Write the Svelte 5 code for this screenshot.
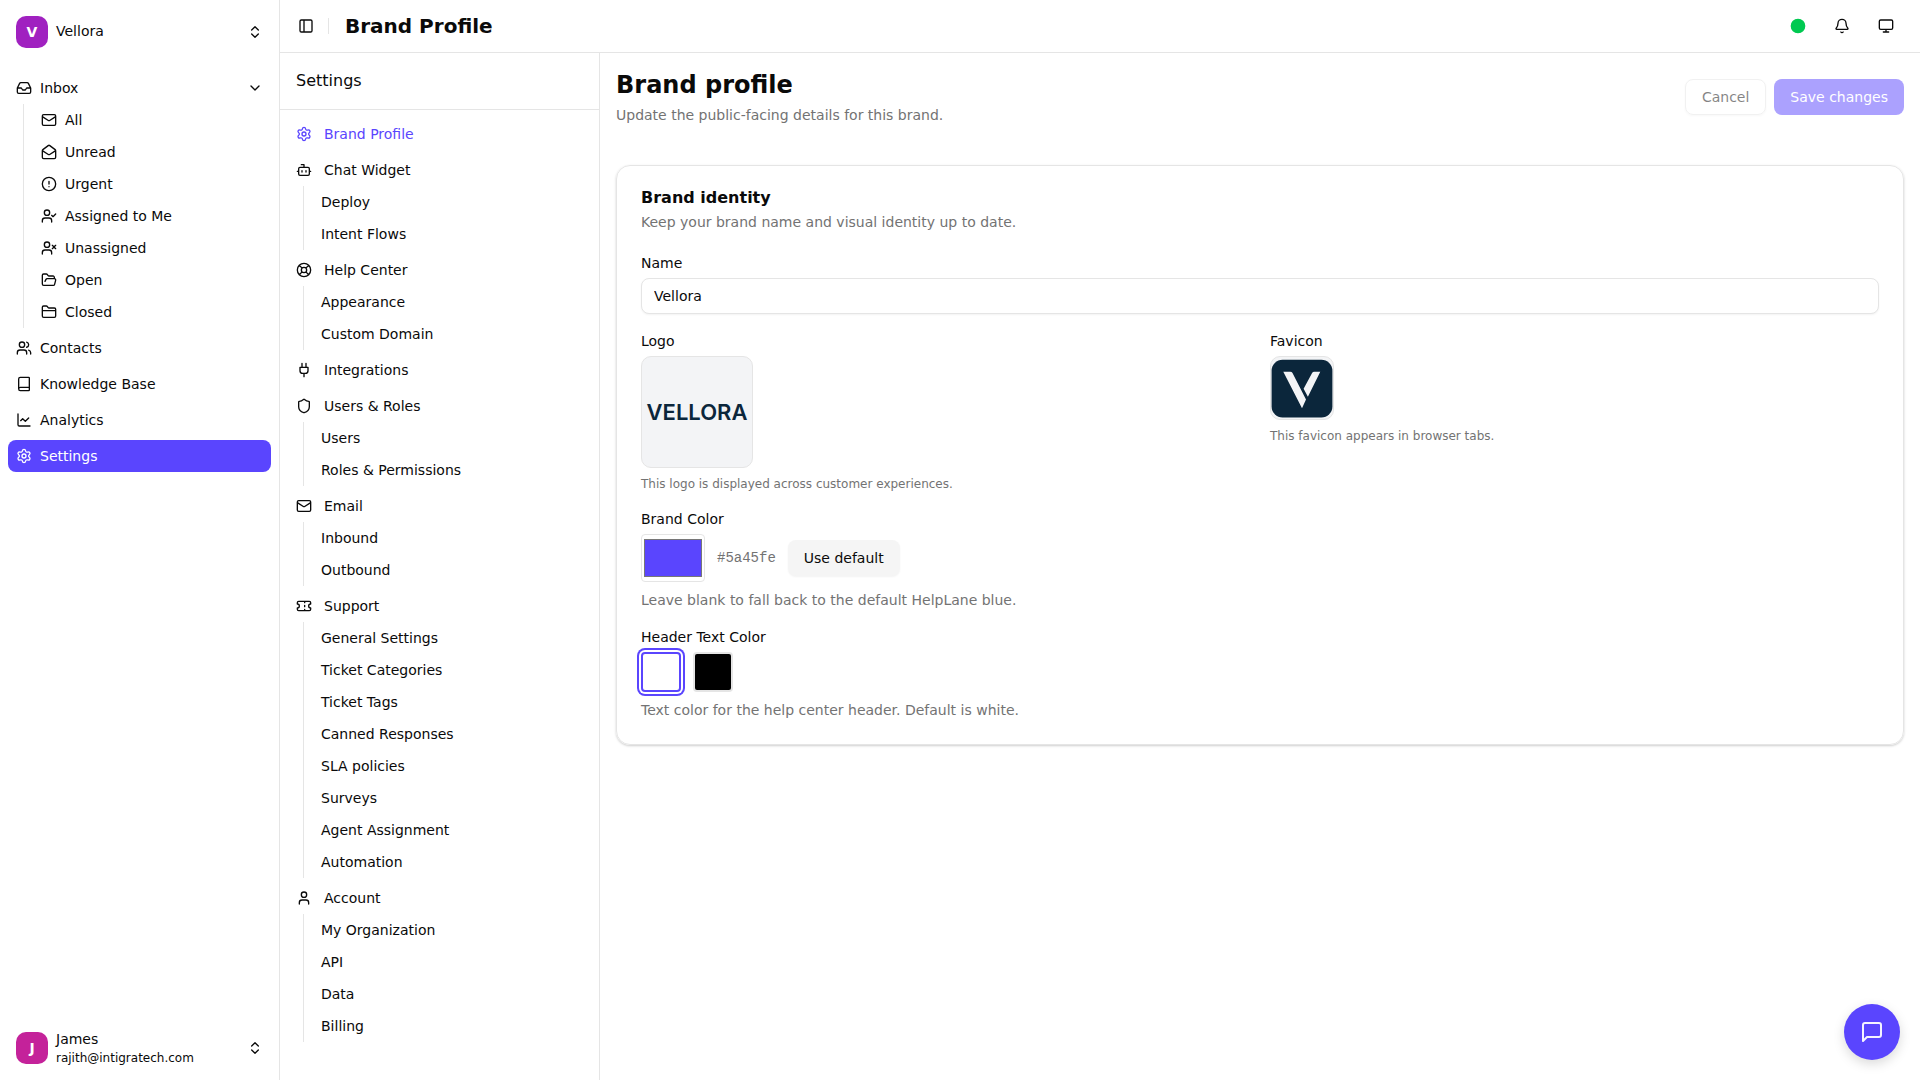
<script>
  const icons = {
    inbox: 'M22 12h-6l-2 3h-4l-2-3H2 M5.45 5.11 2 12v6a2 2 0 0 0 2 2h16a2 2 0 0 0 2-2v-6l-3.45-6.89A2 2 0 0 0 16.76 4H7.24a2 2 0 0 0-1.79 1.11z',
    mail: 'M22 7l-8.991 5.727a2 2 0 0 1-2.009 0L2 7 M4 4h16a2 2 0 0 1 2 2v12a2 2 0 0 1-2 2H4a2 2 0 0 1-2-2V6a2 2 0 0 1 2-2z',
    mailOpen: 'M21.2 8.4c.5.38.8.97.8 1.6v10a2 2 0 0 1-2 2H4a2 2 0 0 1-2-2V10a2 2 0 0 1 .8-1.6l8-6a2 2 0 0 1 2.4 0l8 6Z M22 10l-8.97 5.7a1.94 1.94 0 0 1-2.06 0L2 10',
    alert: 'M2 12a10 10 0 1 0 20 0a10 10 0 1 0-20 0 M12 8v4 M12 16h.01',
    userCheck: 'M16 11l2 2 4-4 M16 21v-2a4 4 0 0 0-4-4H6a4 4 0 0 0-4 4v2 M5 7a4 4 0 1 0 8 0a4 4 0 1 0-8 0',
    userX: 'M16 21v-2a4 4 0 0 0-4-4H6a4 4 0 0 0-4 4v2 M5 7a4 4 0 1 0 8 0a4 4 0 1 0-8 0 M17 8l5 5 M22 8l-5 5',
    folderOpen: 'M6 14l1.5-2.9A2 2 0 0 1 9.24 10H20a2 2 0 0 1 1.94 2.5l-1.54 6a2 2 0 0 1-1.95 1.5H4a2 2 0 0 1-2-2V5a2 2 0 0 1 2-2h3.9a2 2 0 0 1 1.69.9l.81 1.2a2 2 0 0 0 1.67.9H18a2 2 0 0 1 2 2v2',
    folder: 'M20 20a2 2 0 0 0 2-2V8a2 2 0 0 0-2-2h-7.9a2 2 0 0 1-1.69-.9L9.6 3.9A2 2 0 0 0 7.93 3H4a2 2 0 0 0-2 2v13a2 2 0 0 0 2 2Z M2 10h20',
    users: 'M16 21v-2a4 4 0 0 0-4-4H6a4 4 0 0 0-4 4v2 M16 3.128a4 4 0 0 1 0 7.744 M22 21v-2a4 4 0 0 0-3-3.87 M5 7a4 4 0 1 0 8 0a4 4 0 1 0-8 0',
    book: 'M4 19.5v-15A2.5 2.5 0 0 1 6.5 2H19a1 1 0 0 1 1 1v18a1 1 0 0 1-1 1H6.5a1 1 0 0 1 0-5H20',
    chart: 'M3 3v16a2 2 0 0 0 2 2h16 M19 9l-5 5-4-4-3 3',
    settings: 'M9.671 4.136a2.34 2.34 0 0 1 4.659 0 2.34 2.34 0 0 0 3.319 1.915 2.34 2.34 0 0 1 2.33 4.033 2.34 2.34 0 0 0 0 3.831 2.34 2.34 0 0 1-2.33 4.033 2.34 2.34 0 0 0-3.319 1.915 2.34 2.34 0 0 1-4.659 0 2.34 2.34 0 0 0-3.32-1.915 2.34 2.34 0 0 1-2.33-4.033 2.34 2.34 0 0 0 0-3.831A2.34 2.34 0 0 1 6.35 6.051a2.34 2.34 0 0 0 3.319-1.915 M9 12a3 3 0 1 0 6 0a3 3 0 1 0-6 0',
    bot: 'M12 8V4H8 M6 8h12a2 2 0 0 1 2 2v8a2 2 0 0 1-2 2H6a2 2 0 0 1-2-2v-8a2 2 0 0 1 2-2z M2 14h2 M20 14h2 M15 13v2 M9 13v2',
    lifeBuoy: 'M2 12a10 10 0 1 0 20 0a10 10 0 1 0-20 0 M8 12a4 4 0 1 0 8 0a4 4 0 1 0-8 0 M4.93 4.93l4.24 4.24 M14.83 9.17l4.24-4.24 M14.83 14.83l4.24 4.24 M9.17 14.83l-4.24 4.24',
    plug: 'M12 22v-5 M9 8V2 M15 8V2 M18 8v5a4 4 0 0 1-4 4h-4a4 4 0 0 1-4-4V8Z',
    shield: 'M20 13c0 5-3.5 7.5-7.66 8.95a1 1 0 0 1-.67-.01C7.5 20.5 4 18 4 13V6a1 1 0 0 1 1-1c2 0 4.5-1.2 6.24-2.72a1.17 1.17 0 0 1 1.52 0C14.51 3.81 17 5 19 5a1 1 0 0 1 1 1z',
    ticket: 'M2 9a3 3 0 0 1 0 6v2a2 2 0 0 0 2 2h16a2 2 0 0 0 2-2v-2a3 3 0 0 1 0-6V7a2 2 0 0 0-2-2H4a2 2 0 0 0-2 2Z M13 5v2 M13 17v2 M13 11v2',
    user: 'M19 21v-2a4 4 0 0 0-4-4H9a4 4 0 0 0-4 4v2 M8 7a4 4 0 1 0 8 0a4 4 0 1 0-8 0',
    panel: 'M5 3h14a2 2 0 0 1 2 2v14a2 2 0 0 1-2 2H5a2 2 0 0 1-2-2V5a2 2 0 0 1 2-2z M9 3v18',
    bell: 'M10.268 21a2 2 0 0 0 3.464 0 M3.262 15.326A1 1 0 0 0 4 17h16a1 1 0 0 0 .74-1.673C19.41 13.956 18 12.499 18 8A6 6 0 0 0 6 8c0 4.499-1.411 5.956-2.738 7.326',
    monitor: 'M4 3h16a2 2 0 0 1 2 2v10a2 2 0 0 1-2 2H4a2 2 0 0 1-2-2V5a2 2 0 0 1 2-2z M8 21h8 M12 17v4',
    chevronDown: 'M6 9l6 6 6-6',
    chevrons: 'M7 15l5 5 5-5 M7 9l5-5 5 5',
    message: 'M21 15a2 2 0 0 1-2 2H7l-4 4V5a2 2 0 0 1 2-2h14a2 2 0 0 1 2 2z',
  }

  const inboxItems = [
    { label: 'All', icon: 'mail' },
    { label: 'Unread', icon: 'mailOpen' },
    { label: 'Urgent', icon: 'alert' },
    { label: 'Assigned to Me', icon: 'userCheck' },
    { label: 'Unassigned', icon: 'userX' },
    { label: 'Open', icon: 'folderOpen' },
    { label: 'Closed', icon: 'folder' },
  ]

  const mainItems = [
    { label: 'Contacts', icon: 'users' },
    { label: 'Knowledge Base', icon: 'book' },
    { label: 'Analytics', icon: 'chart' },
    { label: 'Settings', icon: 'settings', active: true },
  ]

  const sections = [
    { label: 'Brand Profile', icon: 'settings', active: true },
    { label: 'Chat Widget', icon: 'bot', children: ['Deploy', 'Intent Flows'] },
    { label: 'Help Center', icon: 'lifeBuoy', children: ['Appearance', 'Custom Domain'] },
    { label: 'Integrations', icon: 'plug' },
    { label: 'Users & Roles', icon: 'shield', children: ['Users', 'Roles & Permissions'] },
    { label: 'Email', icon: 'mail', children: ['Inbound', 'Outbound'] },
    {
      label: 'Support',
      icon: 'ticket',
      children: [
        'General Settings',
        'Ticket Categories',
        'Ticket Tags',
        'Canned Responses',
        'SLA policies',
        'Surveys',
        'Agent Assignment',
        'Automation',
      ],
    },
    { label: 'Account', icon: 'user', children: ['My Organization', 'API', 'Data', 'Billing'] },
  ]

  const defaultColor = '#5a45fe'

  let inboxOpen = $state(true)
  let name = $state('Vellora')
  let color = $state(defaultColor)
  let headerText = $state('white')
  let dirty = $derived(name !== 'Vellora' || color !== defaultColor || headerText !== 'white')

  function reset() {
    name = 'Vellora'
    color = defaultColor
    headerText = 'white'
  }
</script>

{#snippet icon(key)}
  <svg class="icon" viewBox="0 0 24 24" aria-hidden="true"><path d={icons[key]} /></svg>
{/snippet}

<div class="app">
  <aside class="sidebar">
    <button class="account" type="button">
      <span class="avatar brand">V</span>
      <span class="who"><span class="name">Vellora</span></span>
      {@render icon('chevrons')}
    </button>

    <nav class="menu" aria-label="Main">
      <div>
        <button class="item" type="button" aria-expanded={inboxOpen} onclick={() => (inboxOpen = !inboxOpen)}>
          {@render icon('inbox')}
          <span class="grow">Inbox</span>
          {@render icon('chevronDown')}
        </button>
        {#if inboxOpen}
          <div class="sub">
            {#each inboxItems as item (item.label)}
              <a class="item" href="#inbox">{@render icon(item.icon)}{item.label}</a>
            {/each}
          </div>
        {/if}
      </div>
      {#each mainItems as item (item.label)}
        <a class="item" class:active={item.active} href="#main">{@render icon(item.icon)}{item.label}</a>
      {/each}
    </nav>

    <button class="account" type="button">
      <span class="avatar person">J</span>
      <span class="who">
        <span class="name">James</span>
        <span class="email">rajith@intigratech.com</span>
      </span>
      {@render icon('chevrons')}
    </button>
  </aside>

  <div class="page">
    <header class="topbar">
      <button class="tool small" type="button" aria-label="Toggle sidebar">{@render icon('panel')}</button>
      <span class="separator"></span>
      <h1>Brand Profile</h1>
      <div class="tools">
        <button class="tool" type="button" aria-label="Online">
          <svg class="icon online" viewBox="0 0 24 24" aria-hidden="true"><circle cx="12" cy="12" r="10" /></svg>
        </button>
        <button class="tool" type="button" aria-label="Notifications">{@render icon('bell')}</button>
        <button class="tool" type="button" aria-label="Theme">{@render icon('monitor')}</button>
      </div>
    </header>

    <div class="body">
      <aside class="settings">
        <h2>Settings</h2>
        <nav class="menu" aria-label="Settings">
          {#each sections as section (section.label)}
            <div>
              <a class="item" class:current={section.active} href="#settings">
                {@render icon(section.icon)}{section.label}
              </a>
              {#if section.children}
                <div class="sub">
                  {#each section.children as child (child)}
                    <a class="item" href="#settings">{child}</a>
                  {/each}
                </div>
              {/if}
            </div>
          {/each}
        </nav>
      </aside>

      <main>
        <div class="intro">
          <div>
            <h2>Brand profile</h2>
            <p>Update the public-facing details for this brand.</p>
          </div>
          <div class="actions">
            <button class="btn outline" type="button" disabled={!dirty} onclick={reset}>Cancel</button>
            <button class="btn primary" type="button" disabled={!dirty}>Save changes</button>
          </div>
        </div>

        <section class="card">
          <div class="card-head">
            <h3>Brand identity</h3>
            <p>Keep your brand name and visual identity up to date.</p>
          </div>

          <div class="fields">
            <div class="field">
              <label for="name">Name</label>
              <input id="name" class="text" type="text" bind:value={name} />
            </div>

            <div class="columns">
              <div class="field">
                <label for="logo">Logo</label>
                <button id="logo" class="upload logo" type="button">VELLORA</button>
                <p class="hint">This logo is displayed across customer experiences.</p>
              </div>
              <div class="field">
                <label for="favicon">Favicon</label>
                <button id="favicon" class="upload favicon" type="button" aria-label="Favicon">
                  <svg viewBox="0 0 62 62" aria-hidden="true">
                    <rect x="0.600" y="2.700" width="60.800" height="57.800" rx="11" fill="#0b263b" />
                    <path d="M12.300 14.700h7q1.500 0 2.200 1.400l13.500 26.400-4 8.700zM49.300 14.700h-6q-1.500 0-2.200 1.400l-8.500 15.700 4.300 8z" fill="#f3f4f6" />
                  </svg>
                </button>
                <p class="hint">This favicon appears in browser tabs.</p>
              </div>
            </div>

            <div class="field">
              <label for="color">Brand Color</label>
              <div class="row">
                <input id="color" class="color" type="color" bind:value={color} />
                <span class="hex">{color}</span>
                <button class="btn secondary" type="button" onclick={() => (color = defaultColor)}>Use default</button>
              </div>
              <p>Leave blank to fall back to the default HelpLane blue.</p>
            </div>

            <div class="field">
              <span class="label" id="header-text">Header Text Color</span>
              <div class="row" role="radiogroup" aria-labelledby="header-text">
                <input class="swatch" type="radio" value="white" aria-label="White" bind:group={headerText} />
                <input class="swatch black" type="radio" value="black" aria-label="Black" bind:group={headerText} />
              </div>
              <p>Text color for the help center header. Default is white.</p>
            </div>
          </div>
        </section>
      </main>
    </div>
  </div>

  <button class="chat" type="button" aria-label="Open chat">{@render icon('message')}</button>
</div>

<style>
  :global(body) {
    margin: 0;
    background: #ffffff;
  }
  .app {
    --text: #0a0a0a;
    --muted: #737373;
    --line: #e5e5e5;
    --primary: #5a45fe;
    display: flex;
    min-height: 100vh;
    color: var(--text);
    font-family: "DejaVu Sans", sans-serif;
    font-size: 14px;
    line-height: 20px;
  }
  .app :global(*) {
    box-sizing: border-box;
  }
  h1,
  h2,
  h3,
  p {
    margin: 0;
  }
  p {
    color: var(--muted);
  }
  button,
  input {
    font: inherit;
    color: inherit;
  }
  button {
    border: 0;
    padding: 0;
    background: none;
    cursor: pointer;
  }
  .icon {
    width: 16px;
    height: 16px;
    flex: none;
    fill: none;
    stroke: currentColor;
    stroke-width: 2;
    stroke-linecap: round;
    stroke-linejoin: round;
  }

  /* sidebar */
  .sidebar {
    width: 280px;
    flex: none;
    display: flex;
    flex-direction: column;
    padding: 8px;
    border-right: 1px solid var(--line);
  }
  .account {
    display: flex;
    align-items: center;
    gap: 8px;
    height: 48px;
    padding: 8px;
    text-align: left;
  }
  .avatar {
    width: 32px;
    height: 32px;
    flex: none;
    display: grid;
    place-items: center;
    border-radius: 10px;
    color: #ffffff;
    font-weight: 700;
  }
  .brand {
    background: #a021c0;
  }
  .person {
    background: #c4229a;
  }
  .who {
    flex: 1;
    display: grid;
  }
  .name {
    margin-bottom: 2px;
    line-height: 18px;
  }
  .email {
    font-size: 12px;
    line-height: 16px;
  }
  .menu {
    display: flex;
    flex-direction: column;
    gap: 4px;
  }
  .sidebar .menu {
    flex: 1;
    padding-top: 16px;
  }
  .item {
    width: 100%;
    height: 32px;
    display: flex;
    align-items: center;
    gap: 8px;
    padding: 0 8px;
    border-radius: 8px;
    color: inherit;
    text-align: left;
    text-decoration: none;
    white-space: nowrap;
  }
  .grow {
    flex: 1;
  }
  .item.active {
    background: var(--primary);
    color: #ffffff;
  }
  .item.current {
    color: var(--primary);
  }
  .sub {
    margin-left: 15px;
    padding-left: 9px;
    border-left: 1px solid var(--line);
  }

  /* top bar */
  .page {
    flex: 1;
    min-width: 0;
    display: flex;
    flex-direction: column;
  }
  .topbar {
    height: 53px;
    display: flex;
    align-items: center;
    padding: 0 16px 0 12px;
    border-bottom: 1px solid var(--line);
  }
  .tool {
    width: 36px;
    height: 36px;
    display: grid;
    place-items: center;
    border-radius: 8px;
  }
  .tool.small {
    width: 28px;
    height: 28px;
  }
  .separator {
    width: 1px;
    height: 16px;
    margin: 0 16px 0 8px;
    background: var(--line);
  }
  h1 {
    font-size: 20px;
    line-height: 28px;
    font-weight: 700;
  }
  .tools {
    margin-left: auto;
    display: flex;
    gap: 8px;
  }
  .online {
    color: #00c951;
    fill: currentColor;
  }

  /* settings navigation */
  .body {
    flex: 1;
    display: flex;
  }
  .settings {
    width: 320px;
    flex: none;
    border-right: 1px solid var(--line);
  }
  .settings h2 {
    padding: 16px;
    border-bottom: 1px solid var(--line);
    font-size: 16px;
    line-height: 24px;
    font-weight: 400;
  }
  .settings .menu {
    padding: 8px;
  }
  .settings .item {
    gap: 12px;
  }

  /* form */
  main {
    flex: 1;
    min-width: 0;
    padding: 16px;
  }
  .intro {
    display: flex;
    align-items: center;
    justify-content: space-between;
    margin-bottom: 40px;
  }
  .intro h2 {
    margin-bottom: 4px;
    font-size: 24px;
    line-height: 32px;
    font-weight: 700;
  }
  .actions {
    display: flex;
    gap: 8px;
  }
  .btn {
    height: 36px;
    padding: 0 16px;
    border-radius: 8px;
  }
  .btn:disabled {
    opacity: 0.5;
    cursor: default;
  }
  .outline {
    border: 1px solid var(--line);
    box-shadow: 0 1px 2px rgba(0, 0, 0, 0.05);
  }
  .primary {
    background: var(--primary);
    color: #ffffff;
  }
  .secondary {
    background: #f5f5f5;
    box-shadow: 0 1px 2px rgba(0, 0, 0, 0.05);
  }
  .card {
    padding: 24px;
    border: 1px solid var(--line);
    border-radius: 14px;
    box-shadow: 0 1px 3px rgba(0, 0, 0, 0.1), 0 1px 2px rgba(0, 0, 0, 0.1);
  }
  .card-head {
    display: grid;
    gap: 6px;
    margin-bottom: 24px;
  }
  h3 {
    font-size: 16px;
    line-height: 16px;
    font-weight: 700;
  }
  .fields {
    display: grid;
    gap: 20px;
  }
  .field {
    display: grid;
    gap: 8px;
    align-content: start;
    justify-items: start;
  }
  label,
  .label {
    line-height: 14px;
  }
  .text {
    width: 100%;
    height: 36px;
    padding: 0 12px;
    border: 1px solid var(--line);
    border-radius: 8px;
    background: #ffffff;
    box-shadow: 0 1px 2px rgba(0, 0, 0, 0.05);
  }
  .columns {
    display: grid;
    grid-template-columns: 1fr 1fr;
    gap: 20px;
  }
  .upload {
    display: grid;
    place-items: center;
    border: 1px solid var(--line);
    border-radius: 10px;
    background: #f3f4f6;
    overflow: hidden;
  }
  .logo {
    width: 112px;
    height: 112px;
    color: #0b263b;
    font-family: Inter, sans-serif;
    font-size: 22px;
    font-weight: 600;
  }
  .favicon {
    width: 64px;
    height: 64px;
  }
  .favicon svg {
    width: 62px;
    height: 62px;
  }
  .hint {
    font-size: 12px;
    line-height: 16px;
  }
  .row {
    display: flex;
    align-items: center;
    gap: 12px;
  }
  .color {
    width: 64px;
    height: 48px;
    padding: 0;
    border: 1px solid var(--line);
    border-radius: 4px;
    background: #ffffff;
    cursor: pointer;
  }
  .hex {
    color: var(--muted);
    font-family: "Liberation Mono", monospace;
  }
  .swatch {
    appearance: none;
    width: 40px;
    height: 40px;
    margin: 0;
    border: 2px solid var(--line);
    border-radius: 4px;
    background: #ffffff;
    cursor: pointer;
  }
  .swatch.black {
    background: #000000;
  }
  .swatch:checked {
    border-color: var(--primary);
    box-shadow: 0 0 0 2px #ffffff, 0 0 0 4px var(--primary);
  }

  .chat {
    position: fixed;
    right: 20px;
    bottom: 20px;
    width: 56px;
    height: 56px;
    display: grid;
    place-items: center;
    border-radius: 50%;
    background: var(--primary);
    color: #f5f3ff;
    box-shadow: 0 4px 12px rgba(0, 0, 0, 0.15);
  }
  .chat .icon {
    width: 24px;
    height: 24px;
  }
</style>
